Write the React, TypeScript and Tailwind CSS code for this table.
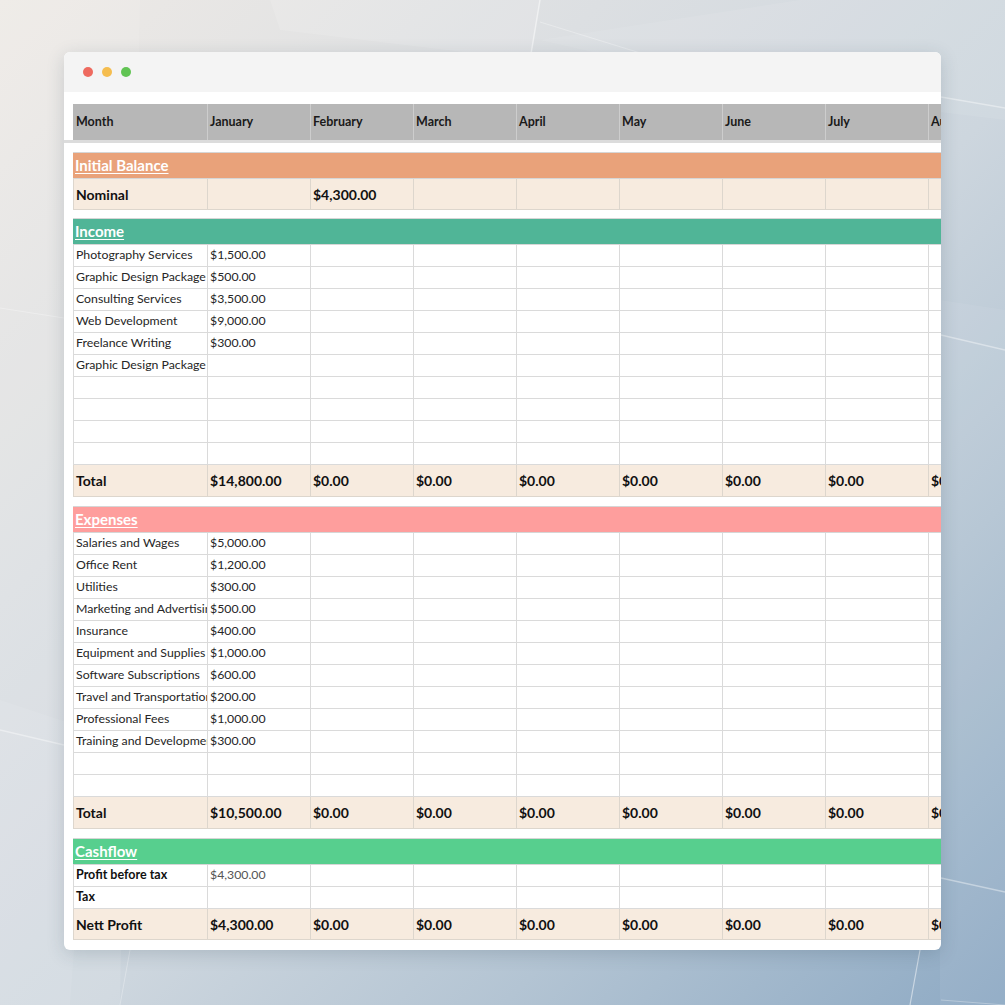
import React from "react";

const FONT = { fontFamily: "Lato, 'Open Sans', sans-serif" };

const MONTHS = ["January", "February", "March", "April", "May", "June", "July", "August"];

function Cell({
  children,
  first,
  className = "",
}: {
  children?: React.ReactNode;
  first?: boolean;
  className?: string;
}) {
  return (
    <div
      className={`flex items-center overflow-hidden whitespace-nowrap pl-[2px] shrink-0 border-r border-b ${
        first ? "w-[135px] border-l" : "w-[103px]"
      } ${className}`}
    >
      {children}
    </div>
  );
}

function DataRow({ label, jan, labelBold, janGray }: { label?: string; jan?: string; labelBold?: boolean; janGray?: boolean }) {
  return (
    <div className="flex h-[22px]">
      <Cell first className={`border-[#dadada] bg-white ${labelBold ? "text-[12.5px] font-bold text-[#111]" : "text-[12.3px] text-[#262626]"}`}>
        {label}
      </Cell>
      <Cell className={`border-[#dadada] bg-white text-[12.3px] ${janGray ? "text-[#555]" : "text-[#262626]"}`}>{jan}</Cell>
      {MONTHS.slice(1).map((m) => (
        <Cell key={m} className="border-[#dadada] bg-white" />
      ))}
    </div>
  );
}

function TotalRow({ label, values, h = "h-[32px]" }: { label: string; values: string[]; h?: string }) {
  return (
    <div className={`flex ${h}`}>
      <Cell first className="border-[#ddd6cd] bg-[#f7ebdf] text-[14px] font-bold text-[#111]">
        {label}
      </Cell>
      {MONTHS.map((m, i) => (
        <Cell key={m} className="border-[#ddd6cd] bg-[#f7ebdf] text-[14px] font-bold text-[#111]">
          {values[i] ?? ""}
        </Cell>
      ))}
    </div>
  );
}

function SectionHeader({ title, color }: { title: string; color: string }) {
  return (
    <div className={`flex h-[27px] w-[959px] items-center border-t border-b border-[#d6d6d6] pl-[2px] ${color}`}>
      <span className="text-[15px] font-bold text-white underline underline-offset-[2px] decoration-1">{title}</span>
    </div>
  );
}

const zeros = ["$0.00", "$0.00", "$0.00", "$0.00", "$0.00", "$0.00", "$0.00"];

export default function App() {
  const income: [string, string][] = [
    ["Photography Services", "$1,500.00"],
    ["Graphic Design Package", "$500.00"],
    ["Consulting Services", "$3,500.00"],
    ["Web Development", "$9,000.00"],
    ["Freelance Writing", "$300.00"],
    ["Graphic Design Package", ""],
    ["", ""],
    ["", ""],
    ["", ""],
    ["", ""],
  ];
  const expenses: [string, string][] = [
    ["Salaries and Wages", "$5,000.00"],
    ["Office Rent", "$1,200.00"],
    ["Utilities", "$300.00"],
    ["Marketing and Advertising", "$500.00"],
    ["Insurance", "$400.00"],
    ["Equipment and Supplies", "$1,000.00"],
    ["Software Subscriptions", "$600.00"],
    ["Travel and Transportation", "$200.00"],
    ["Professional Fees", "$1,000.00"],
    ["Training and Development", "$300.00"],
    ["", ""],
    ["", ""],
  ];

  return (
    <div
      className="relative w-[1005px] h-[1005px] overflow-hidden"
      style={{
        ...FONT,
        background:
          "linear-gradient(135deg, #eeeae6 0%, #dcdfe2 30%, #cdd6de 55%, #b3c4d3 75%, #8eaac4 100%)",
      }}
    >
      <svg className="absolute inset-0" width="1005" height="1005" viewBox="0 0 1005 1005">
        <polygon points="0,0 140,0 120,1005 0,1005" fill="#ffffff" opacity="0.10" />
        <polygon points="270,0 540,0 530,60 280,30" fill="#ffffff" opacity="0.12" />
        <polygon points="540,40 800,0 1005,0 1005,120 760,90" fill="#ffffff" opacity="0.08" />
        <polygon points="0,700 90,730 70,1005 0,1005" fill="#ffffff" opacity="0.08" />
        <polygon points="940,300 1005,310 1005,1005 940,1005" fill="#ffffff" opacity="0.06" />
        <line x1="540" y1="0" x2="530" y2="60" stroke="#ffffff" strokeOpacity="0.5" strokeWidth="1.5" />
        <line x1="540" y1="22" x2="760" y2="90" stroke="#ffffff" strokeOpacity="0.3" strokeWidth="1" />
        <line x1="941" y1="97" x2="1005" y2="108" stroke="#ffffff" strokeOpacity="0.4" strokeWidth="1.5" />
        <line x1="941" y1="335" x2="1005" y2="350" stroke="#ffffff" strokeOpacity="0.4" strokeWidth="1.5" />
        <line x1="941" y1="878" x2="1005" y2="892" stroke="#ffffff" strokeOpacity="0.4" strokeWidth="1.5" />
        <line x1="941" y1="1000" x2="1005" y2="1005" stroke="#ffffff" strokeOpacity="0.3" strokeWidth="1" />
        <line x1="0" y1="730" x2="64" y2="745" stroke="#ffffff" strokeOpacity="0.4" strokeWidth="1.5" />
        <line x1="0" y1="308" x2="64" y2="318" stroke="#ffffff" strokeOpacity="0.3" strokeWidth="1.2" />
        <line x1="920" y1="950" x2="910" y2="1005" stroke="#ffffff" strokeOpacity="0.5" strokeWidth="1.2" />
        <line x1="130" y1="950" x2="120" y2="1005" stroke="#ffffff" strokeOpacity="0.3" strokeWidth="1" />
      </svg>

      <div className="absolute left-[64px] top-[52px] w-[877px] h-[898px] overflow-hidden rounded-[6px] bg-white shadow-[0_4px_18px_rgba(40,60,80,0.18)]">
        {/* title bar */}
        <div className="flex h-[40px] items-center gap-[9px] bg-[#f4f4f4] pl-[19px]">
          <span className="h-[10px] w-[10px] rounded-full bg-[#ee6a5f]" />
          <span className="h-[10px] w-[10px] rounded-full bg-[#f5bd4f]" />
          <span className="h-[10px] w-[10px] rounded-full bg-[#61c454]" />
        </div>

        {/* header row */}
        <div className="pl-[9px] pt-[12px]">
          <div className="flex h-[36px]">
            {["Month", ...MONTHS].map((m, i) => (
              <div
                key={m}
                className={`flex items-center overflow-hidden whitespace-nowrap shrink-0 border-r border-[#cdcdcd] bg-[#b7b7b7] text-[12.5px] font-bold text-[#1a1a1a] ${
                  i === 0 ? "w-[135px] pl-[3px]" : "w-[103px] pl-[2px]"
                }`}
              >
                {m}
              </div>
            ))}
          </div>
        </div>
        <div className="h-[3px] w-full bg-[#dcdcdc]" />

        <div className="pl-[9px] pt-[9px]">
          <SectionHeader title="Initial Balance" color="bg-[#e9a27a]" />
          <TotalRow label="Nominal" values={["", "$4,300.00"]} h="h-[31px]" />

          <div className="mt-[8px]">
            <SectionHeader title="Income" color="bg-[#50b597]" />
            {income.map(([l, v], i) => (
              <DataRow key={i} label={l} jan={v} />
            ))}
            <TotalRow label="Total" values={["$14,800.00", ...zeros, "$0.00"]} />
          </div>

          <div className="mt-[9px]">
            <SectionHeader title="Expenses" color="bg-[#fe9e9d]" />
            {expenses.map(([l, v], i) => (
              <DataRow key={i} label={l} jan={v} />
            ))}
            <TotalRow label="Total" values={["$10,500.00", ...zeros, "$0.00"]} />
          </div>

          <div className="mt-[9px]">
            <SectionHeader title="Cashflow" color="bg-[#57cf8e]" />
            <DataRow label="Profit before tax" jan="$4,300.00" labelBold janGray />
            <DataRow label="Tax" labelBold />
            <TotalRow label="Nett Profit" values={["$4,300.00", ...zeros, "$0.00"]} h="h-[31px]" />
          </div>
        </div>
      </div>
    </div>
  );
}
